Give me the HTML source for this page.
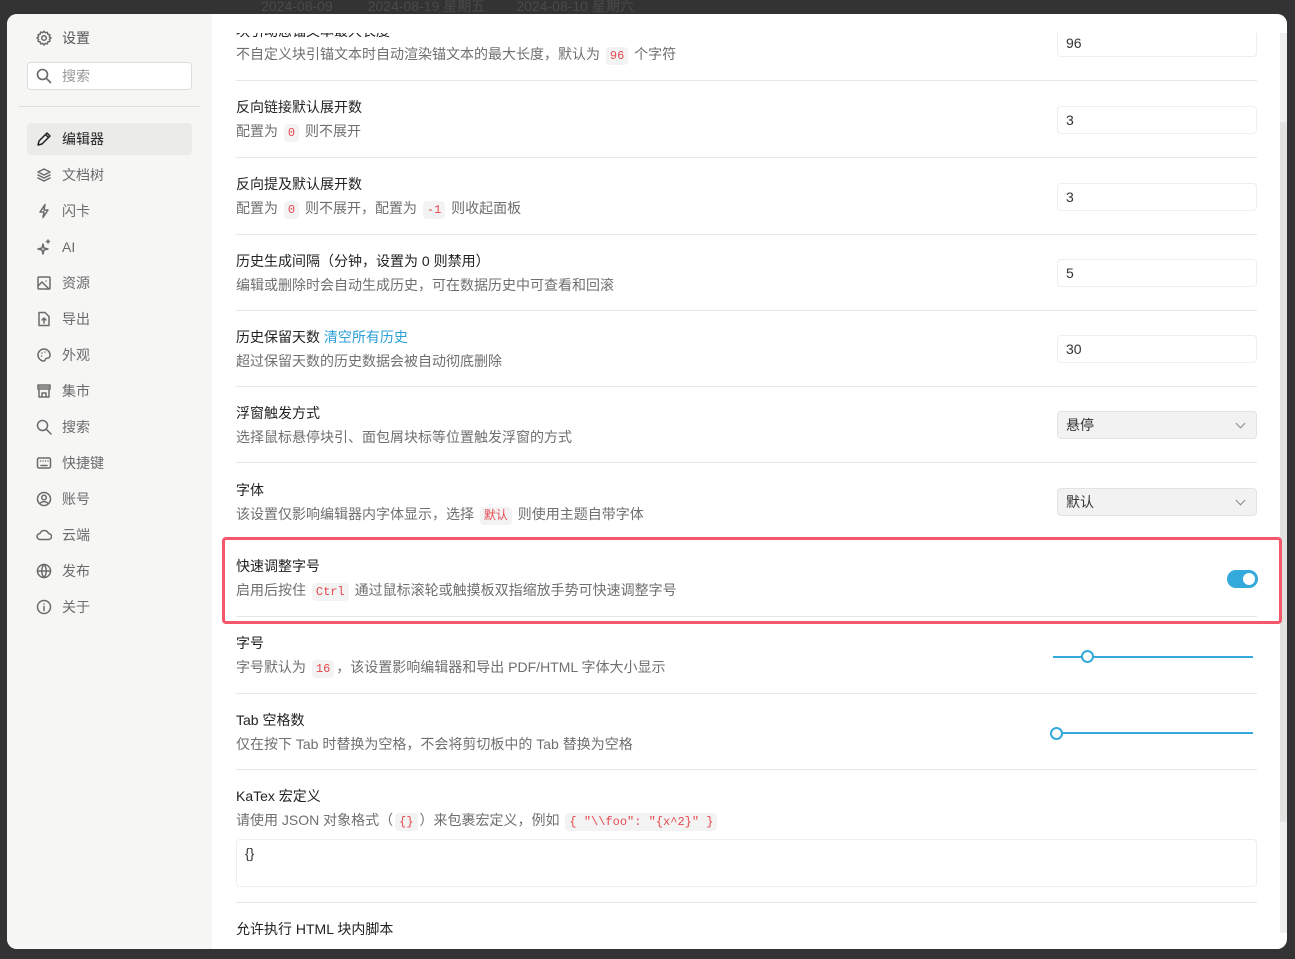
<!DOCTYPE html>
<html><head><meta charset="utf-8"><style>
*{margin:0;padding:0;box-sizing:border-box}
body{width:1295px;height:959px;background:#333;font-family:"Liberation Sans","Noto Sans CJK SC",sans-serif;position:relative;overflow:hidden}
.topbar{position:absolute;top:0;left:230px;height:14px;color:#4a4a4a;font-size:14px;line-height:12px;white-space:nowrap;overflow:hidden}
.dlg{position:absolute;left:7px;top:14px;width:1280px;height:935px;background:#fff;border-radius:10px;overflow:hidden}
.side{position:absolute;left:0;top:0;width:205px;height:935px;background:#f6f6f5}
.si{position:absolute;left:20px;width:165px;height:32px;font-size:14px;color:#6b6b6b;line-height:32px;padding-left:35px}
.si svg{position:absolute;left:9px;top:8px;width:16px;height:16px;fill:none;stroke:#6b6b6b;stroke-width:1.5;stroke-linecap:round;stroke-linejoin:round}
.si.act{background:#ebebea;border-radius:4px;color:#222}
.si.act svg{stroke:#222}
.search{position:absolute;left:20px;top:48px;width:165px;height:28px;border:1px solid #ddd;border-radius:4px;background:#fff;font-size:14px;color:#999;line-height:26px;padding-left:34px}
.search svg{position:absolute;left:8px;top:5px;width:16px;height:16px;fill:none;stroke:#666;stroke-width:1.6}
.sep{position:absolute;left:12px;top:92px;width:181px;height:1px;background:#ddd}
.c{position:absolute;left:229px;font-size:14px;white-space:nowrap}
.t{color:#222}
.d{color:#6f6f6f}
.hr{position:absolute;left:229px;width:1021px;height:1px;background:#e6e6e6}
.in{position:absolute;left:1050px;width:200px;height:28px;border:1px solid #eee;border-radius:4px;font-size:14px;color:#333;line-height:26px;padding-left:8px}
.sel{background:#f2f2f2;border-color:#e3e3e3}
.sel:after{content:"";position:absolute;right:12px;top:8px;width:6px;height:6px;border-right:1.5px solid #888;border-bottom:1.5px solid #888;transform:rotate(45deg)}
code{font-family:"Liberation Mono",monospace;font-size:12px;color:#e5484d;background:#f3f3f3;border-radius:4px;padding:2px 4px;margin:0 2px}
a{color:#2a9fd8;text-decoration:none}
</style></head><body>
<div class="topbar">&nbsp;&nbsp;&nbsp;&nbsp;&nbsp;&nbsp;&nbsp;&nbsp;2024-08-09&nbsp;&nbsp;&nbsp;&nbsp;&nbsp;&nbsp;&nbsp;&nbsp;&nbsp;2024-08-19 星期五&nbsp;&nbsp;&nbsp;&nbsp;&nbsp;&nbsp;&nbsp;&nbsp;2024-08-10 星期六</div>
<div class="dlg">
<div class="side">
<div class="si" style="top:8px;color:#555;left:20px"><svg viewBox="0 0 16 16"><circle cx="8" cy="8" r="2.3"/><path d="M8 1.2l1.3 1.6 2-.5.6 2 2 .6-.5 2L15 8l-1.6 1.3.5 2-2 .6-.6 2-2-.5L8 15l-1.3-1.6-2 .5-.6-2-2-.6.5-2L1 8l1.6-1.3-.5-2 2-.6.6-2 2 .5z"/></svg>设置</div>
<div class="search"><svg viewBox="0 0 16 16"><circle cx="6.5" cy="6.5" r="5"/><path d="M10.3 10.3L15 15"/></svg>搜索</div>
<div class="sep"></div>
<div class="si act" style="top:109px"><svg viewBox="0 0 16 16"><path d="M2 14l1-4 8-8 3 3-8 8z M9.5 3.5l3 3"/></svg>编辑器</div>
<div class="si" style="top:145px"><svg viewBox="0 0 16 16"><path d="M8 2l6 3-6 3-6-3z M2 8l6 3 6-3 M2 11l6 3 6-3"/></svg>文档树</div>
<div class="si" style="top:181px"><svg viewBox="0 0 16 16"><path d="M9 1.5L4 9h4l-1 5.5L12 7H8z"/></svg>闪卡</div>
<div class="si" style="top:217px"><svg viewBox="0 0 16 16"><path d="M7 5l1 4 4 1-4 1-1 4-1-4-4-1 4-1z M12 1v3M10.5 2.5h3"/></svg>AI</div>
<div class="si" style="top:253px"><svg viewBox="0 0 16 16"><rect x="2" y="2" width="12" height="12" rx="1"/><path d="M2 11l4-4 7 7 M10 6h.01"/></svg>资源</div>
<div class="si" style="top:289px"><svg viewBox="0 0 16 16"><path d="M3 1.5h6l4 4v9H3z M8 12V7M6 9l2-2 2 2"/></svg>导出</div>
<div class="si" style="top:325px"><svg viewBox="0 0 16 16"><path d="M8 2a6 6 0 1 0 0 12c1.5 0 1-2 2-2.5s4 .5 4-3.5A6 6 0 0 0 8 2z M6 6h.01M9 5h.01M5.5 9h.01"/></svg>外观</div>
<div class="si" style="top:361px"><svg viewBox="0 0 16 16"><path d="M2 2h12v4H2z M3 6v8h10V6 M6 14v-4h4v4 M2 4h12"/></svg>集市</div>
<div class="si" style="top:397px"><svg viewBox="0 0 16 16"><circle cx="6.5" cy="6.5" r="5"/><path d="M10.3 10.3L15 15"/></svg>搜索</div>
<div class="si" style="top:433px"><svg viewBox="0 0 16 16"><rect x="1.5" y="3" width="13" height="10" rx="1.5"/><path d="M5 10.5h6M4.5 6h.01M7 6h.01M9.5 6h.01M12 6h.01"/></svg>快捷键</div>
<div class="si" style="top:469px"><svg viewBox="0 0 16 16"><circle cx="8" cy="8" r="6.5"/><circle cx="8" cy="6.5" r="2.3"/><path d="M4 12.5c2-2.5 6-2.5 8 0"/></svg>账号</div>
<div class="si" style="top:505px"><svg viewBox="0 0 16 16"><path d="M4 12.5h8.5a3 3 0 0 0 0-6 4.5 4.5 0 0 0-8.5 0 3 3 0 0 0 0 6z"/></svg>云端</div>
<div class="si" style="top:541px"><svg viewBox="0 0 16 16"><circle cx="8" cy="8" r="6.5"/><path d="M1.5 8h13M8 1.5c-3 3.5-3 9.5 0 13M8 1.5c3 3.5 3 9.5 0 13"/></svg>发布</div>
<div class="si" style="top:577px"><svg viewBox="0 0 16 16"><circle cx="8" cy="8" r="6.5"/><path d="M8 7.5v4M8 5h.01"/></svg>关于</div>
</div>

<div style="position:absolute;left:205px;top:0;width:1075px;height:19px;background:#fff;z-index:2"></div>
<div class="c t" style="top:7px">块引动态锚文本最大长度</div>
<div class="c d" style="top:30px">不自定义块引锚文本时自动渲染锚文本的最大长度，默认为 <code>96</code> 个字符</div>
<div class="in" style="top:15px">96</div>
<div class="hr" style="top:66px"></div>

<div class="c t" style="top:83px">反向链接默认展开数</div>
<div class="c d" style="top:107px">配置为 <code>0</code> 则不展开</div>
<div class="in" style="top:92px">3</div>
<div class="hr" style="top:143px"></div>

<div class="c t" style="top:160px">反向提及默认展开数</div>
<div class="c d" style="top:184px">配置为 <code>0</code> 则不展开，配置为 <code>-1</code> 则收起面板</div>
<div class="in" style="top:169px">3</div>
<div class="hr" style="top:220px"></div>

<div class="c t" style="top:237px">历史生成间隔（分钟，设置为 0 则禁用）</div>
<div class="c d" style="top:261px">编辑或删除时会自动生成历史，可在数据历史中可查看和回滚</div>
<div class="in" style="top:245px">5</div>
<div class="hr" style="top:296px"></div>

<div class="c t" style="top:313px">历史保留天数 <a>清空所有历史</a></div>
<div class="c d" style="top:337px">超过保留天数的历史数据会被自动彻底删除</div>
<div class="in" style="top:321px">30</div>
<div class="hr" style="top:372px"></div>

<div class="c t" style="top:389px">浮窗触发方式</div>
<div class="c d" style="top:413px">选择鼠标悬停块引、面包屑块标等位置触发浮窗的方式</div>
<div class="in sel" style="top:397px">悬停</div>
<div class="hr" style="top:448px"></div>

<div class="c t" style="top:466px">字体</div>
<div class="c d" style="top:490px">该设置仅影响编辑器内字体显示，选择 <code>默认</code> 则使用主题自带字体</div>
<div class="in sel" style="top:474px">默认</div>
<div class="hr" style="top:524px"></div>

<div class="c t" style="top:542px">快速调整字号</div>
<div class="c d" style="top:566px">启用后按住 <code>Ctrl</code> 通过鼠标滚轮或触摸板双指缩放手势可快速调整字号</div>
<div style="position:absolute;left:1220px;top:556px;width:31px;height:18px;border-radius:9px;background:#33a9dc"><div style="position:absolute;right:3px;top:3px;width:12px;height:12px;border-radius:50%;background:#fff"></div></div>
<div class="hr" style="top:602px"></div>

<div class="c t" style="top:619px">字号</div>
<div class="c d" style="top:643px">字号默认为 <code>16</code>，该设置影响编辑器和导出 PDF/HTML 字体大小显示</div>
<div style="position:absolute;left:1046px;top:642px;width:200px;height:2px;background:#33a9dc"></div>
<div style="position:absolute;left:1074px;top:636px;width:13px;height:13px;border-radius:50%;background:#fff;border:2.5px solid #33a9dc"></div>
<div class="hr" style="top:679px"></div>

<div class="c t" style="top:696px">Tab 空格数</div>
<div class="c d" style="top:720px">仅在按下 Tab 时替换为空格，不会将剪切板中的 Tab 替换为空格</div>
<div style="position:absolute;left:1046px;top:718px;width:200px;height:2px;background:#33a9dc"></div>
<div style="position:absolute;left:1043px;top:713px;width:13px;height:13px;border-radius:50%;background:#fff;border:2.5px solid #33a9dc"></div>
<div class="hr" style="top:755px"></div>

<div class="c t" style="top:772px">KaTex 宏定义</div>
<div class="c d" style="top:796px">请使用 JSON 对象格式（<code>{}</code>）来包裹宏定义，例如 <code>{ "\\foo": "{x^2}" }</code></div>
<div style="position:absolute;left:229px;top:825px;width:1021px;height:48px;border:1px solid #eee;border-radius:4px;font-size:14px;color:#333;padding:5px 8px">{}</div>
<div class="hr" style="top:888px"></div>
<div class="c t" style="top:905px">允许执行 HTML 块内脚本</div>
<div style="position:absolute;left:205px;top:921px;width:1068px;height:14px;background:#fff"></div>

<div style="position:absolute;left:1273px;top:19px;width:7px;height:900px;background:#f0f0f0"></div>
<div style="position:absolute;left:1273px;top:108px;width:7px;height:700px;background:#e2e2e0"></div>
<div style="position:absolute;left:215px;top:523px;width:1060px;height:87px;border:3px solid #f5566a;border-radius:4px;z-index:3"></div>
</div>
</body></html>
